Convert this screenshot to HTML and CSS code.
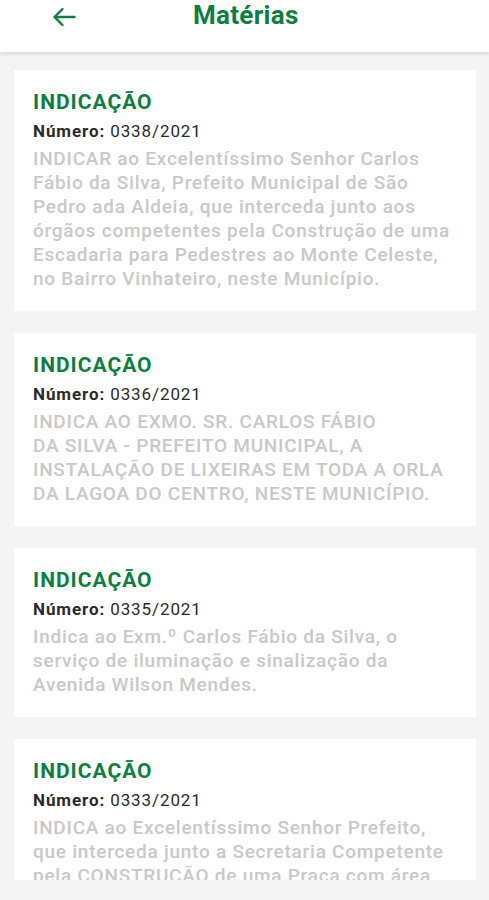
FILE: index.html
```html
<!DOCTYPE html>
<html lang="pt-BR">
<head>
    <meta charset="utf-8">
    <title>Matérias</title>
    <meta name="viewport" content="width=device-width, initial-scale=1">
    <link rel="stylesheet" href="styles.css">
</head>
<body>

<header class="topbar">
    <a class="back" href="#" aria-label="Voltar">
        <svg width="24" height="20" viewBox="0 0 24 20" aria-hidden="true">
            <path d="M22.5 10H2.5M10.5 2L2.5 10L10.5 18" fill="none" stroke="currentColor" stroke-width="2.4" stroke-linecap="round" stroke-linejoin="round"/>
        </svg>
    </a>
    <h1>Matérias</h1>
</header>

<main class="list">
    <article class="card">
        <h2>INDICAÇÃO</h2>
        <p class="num"><b>Número:</b> 0338/2021</p>
        <p class="desc">INDICAR ao Excelentíssimo Senhor Carlos Fábio da Silva, Prefeito Municipal de São Pedro ada Aldeia, que interceda junto aos órgãos competentes pela Construção de uma Escadaria para Pedestres ao Monte Celeste, no Bairro Vinhateiro, neste Município.</p>
    </article>

    <article class="card">
        <h2>INDICAÇÃO</h2>
        <p class="num"><b>Número:</b> 0336/2021</p>
        <p class="desc">INDICA AO EXMO. SR. CARLOS FÁBIO<br>DA SILVA - PREFEITO MUNICIPAL, A INSTALAÇÃO DE LIXEIRAS EM TODA A ORLA DA LAGOA DO CENTRO, NESTE MUNICÍPIO.</p>
    </article>

    <article class="card">
        <h2>INDICAÇÃO</h2>
        <p class="num"><b>Número:</b> 0335/2021</p>
        <p class="desc">Indica ao Exm.º Carlos Fábio da Silva, o serviço de iluminação e sinalização da Avenida Wilson Mendes.</p>
    </article>

    <article class="card">
        <h2>INDICAÇÃO</h2>
        <p class="num"><b>Número:</b> 0333/2021</p>
        <p class="desc">INDICA ao Excelentíssimo Senhor Prefeito, que interceda junto a Secretaria Competente pela CONSTRUÇÃO de uma Praça com área de lazer no Bairro, neste Município.</p>
    </article>
</main>

<footer class="bottom"></footer>

</body>
</html>
```

FILE: styles.css
```css
:root {
    --green: #0a7f3f;
    --bg: #f4f4f4;
}

html, body {
    height: 100%;
}

body {
    margin: 0;
    display: flex;
    flex-direction: column;
    overflow: hidden;

    font-family: Roboto, "Noto Sans", sans-serif;
    background: var(--bg);
}

.topbar {
    position: relative;
    z-index: 1;
    flex: 0 0 52px;
    display: flex;
    align-items: flex-start;
    background: white;
    box-shadow: 0 2px 4px rgba(0, 0, 0, 0.12);
}

.back {
    display: flex;
    margin: 7px 0 0 52px;
    color: var(--green);
}

.topbar h1 {
    margin: 0 0 0 117px;
    font-size: 26px;
    line-height: 31px;
    letter-spacing: 0.3px;
    font-weight: bold;
    color: var(--green);
}

.list {
    flex: 1;
    overflow: hidden;
    display: flex;
    flex-direction: column;
    gap: 22px;
    padding: 18px 13px 0 14px;
}

.card {
    flex-shrink: 0;
    padding: 20px 19px 20px;
    background: white;
}

.card h2 {
    margin: 0 0 6px;
    font-size: 21px;
    line-height: 24px;
    letter-spacing: 1px;
    font-weight: bold;
    color: var(--green);
}

.num {
    margin: 0 0 5px;
    font-size: 17px;
    line-height: 22px;
    letter-spacing: 0.9px;
    color: #2a2a2a;
}

.desc {
    margin: 0;
    font-size: 19px;
    line-height: 24px;
    letter-spacing: 0.75px;
    font-weight: 500;
    color: #c8c8c8;
}

.bottom {
    flex: 0 0 20px;
}
```
